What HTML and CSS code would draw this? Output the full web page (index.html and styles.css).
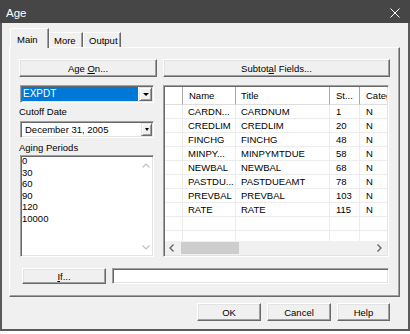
FILE: index.html
```html
<!DOCTYPE html>
<html>

<head>
<title>Age</title>
<meta charset="UTF-8">

<link rel="stylesheet" href="styles.css">
</head>

<body>

	<div id="dialog" class="window">
		<div class="titlebar">
			<span class="title">Age</span>
			<svg class="close" width="10" height="10" viewBox="0 0 10 10"><path d="M0.5 0.5L9.5 9.5M9.5 0.5L0.5 9.5" stroke="#fff" stroke-width="1" fill="none"/></svg>
		</div>

		<div class="client">
			<nav class="tabs">
				<div class="tab active">Main</div>
				<div class="tab">More</div>
				<div class="tab output">Output</div>
			</nav>

			<div class="panel">
				<button class="btn">Age <u>O</u>n...</button>
				<button class="btn">Subtot<u>a</u>l Fields...</button>

				<div class="fields">
					<div class="combo sunken">
						<span class="value selected">EXPDT</span>
						<span class="drop"><i class="tri"></i></span>
					</div>
					<label class="caption">Cutoff Date</label>
					<div class="combo date sunken">
						<span class="value">December 31, 2005</span>
						<span class="drop"><i class="tri"></i></span>
					</div>
					<label class="caption second">Aging Periods</label>
					<div class="listbox sunken">
						<ul class="items">
							<li>0</li>
							<li>30</li>
							<li>60</li>
							<li>90</li>
							<li>120</li>
							<li>10000</li>
						</ul>
						<div class="vscroll">
							<svg width="8" height="5" viewBox="0 0 8 5"><path d="M0.5 4.5L4 1L7.5 4.5" stroke="#c2c2c2" stroke-width="1.2" fill="none"/></svg>
							<svg width="8" height="5" viewBox="0 0 8 5"><path d="M0.5 0.5L4 4L7.5 0.5" stroke="#c2c2c2" stroke-width="1.2" fill="none"/></svg>
						</div>
					</div>
				</div>

				<div class="grid sunken">
					<div class="grid-view">
						<table>
							<colgroup>
								<col class="c-row">
								<col class="c-name">
								<col class="c-title">
								<col class="c-start">
								<col class="c-cat">
							</colgroup>
							<thead>
								<tr><th></th><th>Name</th><th>Title</th><th class="num">St...</th><th class="num">Category</th></tr>
							</thead>
							<tbody>
								<tr><td></td><td>CARDN...</td><td>CARDNUM</td><td class="num">1</td><td class="num">N</td></tr>
								<tr><td></td><td>CREDLIM</td><td>CREDLIM</td><td class="num">20</td><td class="num">N</td></tr>
								<tr><td></td><td>FINCHG</td><td>FINCHG</td><td class="num">48</td><td class="num">N</td></tr>
								<tr><td></td><td>MINPY...</td><td>MINPYMTDUE</td><td class="num">58</td><td class="num">N</td></tr>
								<tr><td></td><td>NEWBAL</td><td>NEWBAL</td><td class="num">68</td><td class="num">N</td></tr>
								<tr><td></td><td>PASTDU...</td><td>PASTDUEAMT</td><td class="num">78</td><td class="num">N</td></tr>
								<tr><td></td><td>PREVBAL</td><td>PREVBAL</td><td class="num">103</td><td class="num">N</td></tr>
								<tr><td></td><td>RATE</td><td>RATE</td><td class="num">115</td><td class="num">N</td></tr>
								<tr><td></td><td></td><td></td><td></td><td></td></tr>
								<tr><td></td><td></td><td></td><td></td><td></td></tr>
							</tbody>
						</table>
					</div>
					<div class="hscroll">
						<span class="arrow"><svg width="5" height="8" viewBox="0 0 5 8"><path d="M4.5 0.5L1 4L4.5 7.5" stroke="#606060" stroke-width="1.3" fill="none"/></svg></span>
						<span class="thumb"></span>
						<span class="arrow right"><svg width="5" height="8" viewBox="0 0 5 8"><path d="M0.5 0.5L4 4L0.5 7.5" stroke="#606060" stroke-width="1.3" fill="none"/></svg></span>
					</div>
				</div>

				<div class="ifrow">
					<button class="btn if"><u>I</u>f...</button>
					<div class="textbox sunken"></div>
				</div>
			</div>

			<div class="actions">
				<button class="btn">OK</button>
				<button class="btn">Cancel</button>
				<button class="btn help">Help</button>
			</div>
		</div>
	</div>

</body>
</html>
```

FILE: styles.css
```css
* {
	box-sizing: border-box;
}

body {
	margin: 0;
	background: #fff;
	font: 9.5px "Liberation Sans", Arial, sans-serif;
	color: #000;
}

.window {
	width: 410px;
	height: 331px;
	display: flex;
	flex-direction: column;
	background: #f0f0f0;
}

.titlebar {
	height: 23px;
	flex: none;
	background: #464646;
	color: #fff;
	display: flex;
	align-items: center;
	justify-content: space-between;
	padding: 2px 10px 0 6px;
	font-size: 11.5px;
}

.client {
	flex: 1;
	border: 2px solid #5a5a5a;
	border-top: 0;
	padding: 5px 8px 0 7px;
}

/* tabs */
.tabs {
	height: 19px;
	display: flex;
	align-items: flex-end;
	padding-left: 1px;
}

.tab {
	height: 15px;
	line-height: 16px;
	padding-left: 4px;
	border: 1px solid;
	border-bottom: 0;
	border-color: #fff #696969 #696969 #fff;
	box-shadow: inset -1px 0 #a0a0a0;
	width: 34px;
}

.tab.active {
	position: relative;
	z-index: 1;
	width: 39px;
	height: 20px;
	margin-bottom: -1px;
	padding: 2px 0 0 6px;
	line-height: 18px;
	background: #f0f0f0;
}

.tab.output {
	width: 38px;
	padding-left: 5px;
}

.panel {
	height: 250px;
	border: 1px solid;
	border-color: #fff #696969 #696969 #fff;
	box-shadow: inset -1px -1px #a0a0a0;
	padding: 11px 9px 9px 9px;
	display: grid;
	grid-template-columns: 138px 1fr;
	grid-template-rows: 18px 172px 19px;
	column-gap: 6px;
	row-gap: 8px;
}

/* raised and sunken edges */
.btn {
	font: inherit;
	color: #000;
	background: #f0f0f0;
	border: 1px solid;
	border-color: #fff #696969 #696969 #fff;
	box-shadow: inset -1px -1px #a0a0a0, inset 1px 1px #e3e3e3;
	padding: 0;
}

.sunken {
	border: 1px solid;
	border-color: #a0a0a0 #fff #fff #a0a0a0;
	box-shadow: inset 1px 1px #696969, inset -1px -1px #e3e3e3;
	padding: 1px;
	background: #fff;
}

/* left column */
.fields {
	display: flex;
	flex-direction: column;
}

.combo {
	height: 18px;
	margin: 0 3px 0 1px;
	display: flex;
}

.combo .value {
	flex: 1;
	padding-left: 1px;
	line-height: 14px;
	font-size: 10px;
}

.combo .value.selected {
	background: #0078d7;
	color: #fff;
	margin-right: 1px;
}

.combo .drop {
	width: 13px;
	display: flex;
	align-items: center;
	justify-content: center;
	background: #f0f0f0;
	border: 1px solid;
	border-color: #e3e3e3 #696969 #696969 #e3e3e3;
	box-shadow: inset 1px 1px #fff, inset -1px -1px #a0a0a0;
}

.tri {
	width: 0;
	height: 0;
	border-left: 3px solid transparent;
	border-right: 3px solid transparent;
	border-top: 3px solid #000;
}

.combo.date {
	height: 17px;
}

.combo.date .value {
	padding-left: 3px;
	line-height: 13px;
	font-size: 9.5px;
}

.combo.date .drop {
	width: 11px;
}

.combo.date .tri {
	border-left-width: 2.5px;
	border-right-width: 2.5px;
}

.caption {
	display: block;
	height: 18px;
	line-height: 18px;
}

.caption.second {
	height: 17px;
	line-height: 19px;
}

.listbox {
	flex: 1;
	margin: 0 3px 0 1px;
	display: flex;
}

.items {
	flex: 1;
	list-style: none;
	margin: -2px 0 0;
	padding: 0;
	line-height: 11.6px;
}

.vscroll {
	width: 12px;
	display: flex;
	flex-direction: column;
	justify-content: space-between;
	align-items: center;
	padding: 6px 0 5px;
}

/* field grid */
.grid {
	margin-right: 1px;
	display: flex;
	flex-direction: column;
	overflow: hidden;
}

.grid-view {
	flex: 1;
	overflow: hidden;
}

.grid table {
	width: 245px;
	table-layout: fixed;
	border-collapse: separate;
	border-spacing: 0;
}

.c-row { width: 18px; }
.c-name { width: 53px; }
.c-title { width: 94px; }
.c-start { width: 30px; }
.c-cat { width: 50px; }

.grid th {
	height: 18px;
	padding: 0 0 0 6px;
	font-weight: normal;
	text-align: left;
	white-space: nowrap;
	overflow: hidden;
	border-right: 1px solid #a9a9a9;
	border-bottom: 1px solid #dedede;
}

.grid th:nth-child(3) {
	padding-left: 5px;
}

.grid td {
	height: 14px;
	line-height: 13px;
	padding: 0 0 0 5px;
	white-space: nowrap;
	overflow: hidden;
	border-right: 1px solid #ececec;
	border-bottom: 1px solid #ececec;
}

.grid .num {
	padding-left: 6px;
}

.hscroll {
	height: 14px;
	flex: none;
	background: #f0f0f0;
	display: flex;
	align-items: center;
}

.hscroll .arrow {
	width: 16px;
	display: flex;
	padding-left: 4px;
}

.hscroll .arrow.right {
	margin-left: auto;
	padding-left: 6px;
}

.hscroll .thumb {
	width: 58px;
	height: 12px;
	background: #cdcdcd;
}

/* condition row */
.ifrow {
	grid-column: 1 / 3;
	margin-top: 3px;
	display: flex;
	gap: 6px;
	padding: 0 1px 0 3px;
}

.btn.if {
	width: 84px;
}

.textbox {
	flex: 1;
}

/* dialog buttons */
.actions {
	margin-top: 6px;
	display: flex;
	justify-content: flex-end;
	padding-right: 10px;
}

.actions .btn {
	width: 64px;
	height: 18px;
	margin-left: 6px;
}

.actions .btn.help {
	width: 53px;
}
```
